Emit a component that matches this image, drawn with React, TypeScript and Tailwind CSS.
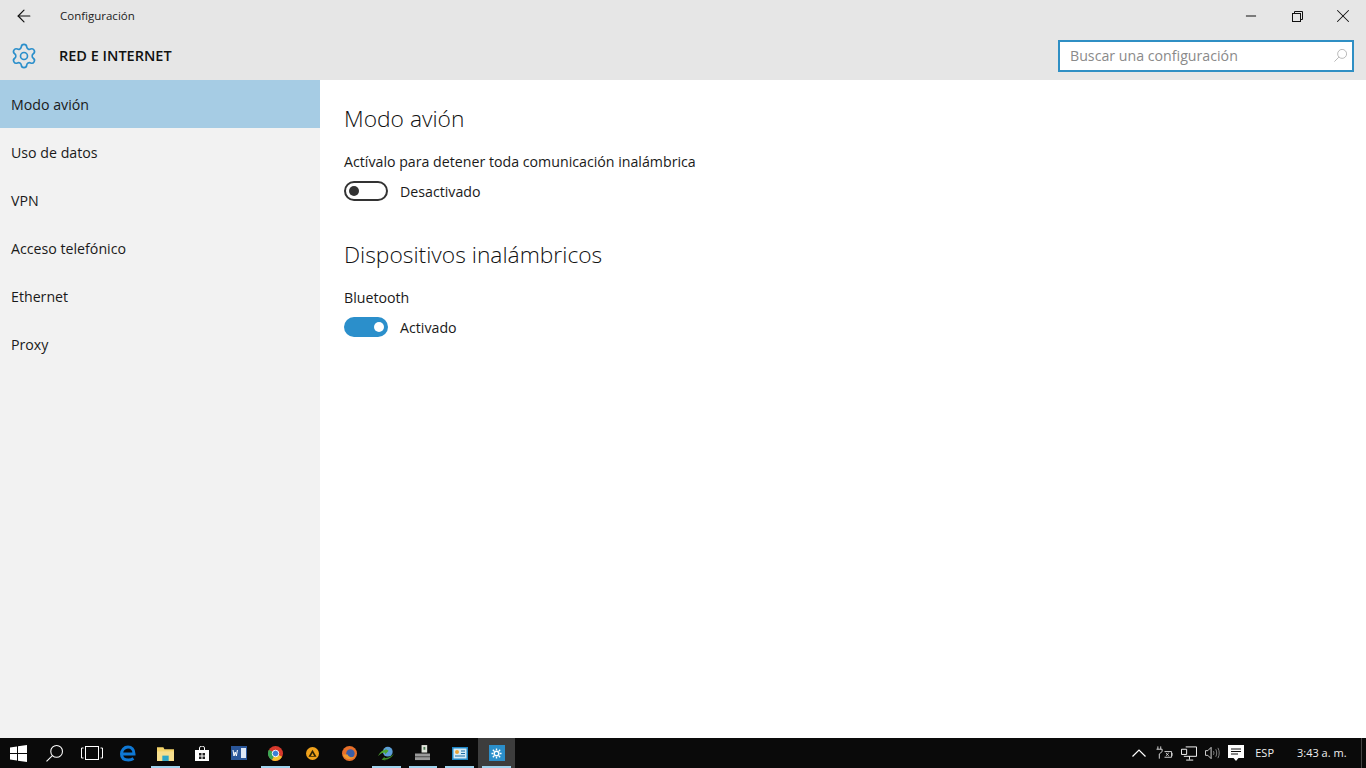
import { ArrowLeft, Minus, Settings, X } from 'lucide-react';

const font = { fontFamily: '"Open Sans", "Noto Sans", sans-serif' };

const navItems = ['Modo avión', 'Uso de datos', 'VPN', 'Acceso telefónico', 'Ethernet', 'Proxy'];

function Magnifier({ className, color }: { className?: string; color: string }) {
  return (
    <svg viewBox="0 0 16 16" className={className} fill="none" stroke={color} strokeWidth="1">
      <circle cx="10" cy="6" r="5.5" />
      <path d="M6 10 .5 15.500" />
    </svg>
  );
}

function RestoreIcon() {
  return (
    <svg viewBox="0 0 11 11" className="h-[11px] w-[11px]" fill="none" stroke="#111" strokeWidth="1">
      <rect x="0.5" y="2.5" width="8" height="8" />
      <path d="M2.500 2.500V.5h8v8H8.500" />
    </svg>
  );
}

function Toggle({ on }: { on: boolean }) {
  return on ? (
    <div className="flex h-5 w-11 items-center justify-end rounded-full bg-[#2b8fcb] pr-[4px]">
      <div className="h-[10px] w-[10px] rounded-full bg-white" />
    </div>
  ) : (
    <div className="flex h-5 w-11 items-center rounded-full border-2 border-[#333] pl-[3px]">
      <div className="h-[10px] w-[10px] rounded-full bg-[#333]" />
    </div>
  );
}

function Setting({ label, state, on }: { label: string; state: string; on: boolean }) {
  return (
    <div>
      <div className="text-[14.2px] leading-5 text-[#1a1a1a]">{label}</div>
      <div className="mt-[8px] flex items-center gap-3">
        <Toggle on={on} />
        <span className="pt-[2px] text-[14.2px] leading-5 text-[#1a1a1a]">{state}</span>
      </div>
    </div>
  );
}

function WinLogo() {
  return (
    <svg viewBox="0 0 17 17" className="h-[17px] w-[17px]" fill="#fff">
      <path d="M0 2.500 7 1.500V8H0zM8 1.300 17 0v8H8zM0 9h7v6.500l-7-1zM8 9h9v8l-9-1.300z" />
    </svg>
  );
}

function TaskIcon({ children, open, active }: { children: React.ReactNode; open?: boolean; active?: boolean }) {
  return (
    <div className={`relative flex h-[30px] w-[36.8px] items-center justify-center ${active ? 'bg-[#3d3d3d]' : ''}`}>
      {children}
      {open && <div className="absolute inset-x-[4px] bottom-0 h-[2px] bg-[#9fd3ee]" />}
    </div>
  );
}

export default function App() {
  return (
    <div className="flex h-[768px] w-[1366px] flex-col overflow-hidden bg-white" style={font}>
      <header className="h-20 shrink-0 bg-[#e6e6e6]">
        <div className="flex h-8 items-center">
          <ArrowLeft className="ml-[14px] h-5 w-5 text-[#111]" strokeWidth={1.4} />
          <span className="ml-[26px] text-[11.5px] text-[#222]">Configuración</span>
          <div className="ml-auto flex items-center">
            <div className="flex w-[46px] justify-center"><Minus className="h-4 w-4 text-[#111]" strokeWidth={1.5} /></div>
            <div className="flex w-[46px] justify-center"><RestoreIcon /></div>
            <div className="flex w-[46px] justify-center"><X className="h-[22px] w-[22px] text-[#111]" strokeWidth={1.1} /></div>
          </div>
        </div>
        <div className="flex h-12 items-center pb-[1px]">
          <Settings className="ml-[10px] h-[28px] w-[28px] text-[#2b8fcb]" strokeWidth={1.4} />
          <span className="ml-[21px] text-[14.5px] font-semibold text-[#111]">RED E INTERNET</span>
          <div className="ml-auto mr-[12px] flex h-8 w-[296px] items-center justify-between border-2 border-[#2f8fc4] bg-white pl-[10px] pr-[5px]">
            <span className="text-[14.2px] text-[#8a8a8a]">Buscar una configuración</span>
            <Magnifier className="h-[13px] w-[13px]" color="#aaa" />
          </div>
        </div>
      </header>

      <div className="flex min-h-0 flex-1">
        <nav className="w-80 shrink-0 bg-[#f2f2f2]">
          {navItems.map((item, i) => (
            <div
              key={item}
              className={`flex h-12 items-center pl-[11px] pt-[2px] text-[14.2px] text-[#1a1a1a] ${i === 0 ? 'bg-[#a6cce4]' : ''}`}
            >
              {item}
            </div>
          ))}
        </nav>
        <main className="flex-1 pl-6 pt-[23px]">
          <h2 className="text-[22.8px] font-light leading-8 text-[#111]">Modo avión</h2>
          <div className="mt-[17px]">
            <Setting label="Actívalo para detener toda comunicación inalámbrica" state="Desactivado" on={false} />
          </div>
          <h2 className="mt-[37px] text-[22.8px] font-light leading-8 text-[#111]">Dispositivos inalámbricos</h2>
          <div className="mt-[17px]">
            <Setting label="Bluetooth" state="Activado" on />
          </div>
        </main>
      </div>

      <footer className="flex h-[30px] shrink-0 items-center bg-[#0a0a0a] text-white">
        <div className="flex w-[36.6px] justify-center"><WinLogo /></div>
        <TaskIcon>
          <Magnifier className="h-[17px] w-[17px]" color="#fff" />
        </TaskIcon>
        <TaskIcon>
          <svg viewBox="0 0 22 14" className="h-[14px] w-[22px]" fill="none" stroke="#fff" strokeWidth="1">
            <rect x="4.5" y="0.5" width="13" height="13" />
            <path d="M2.500 2H.5v10h2M19.500 2h2v10h-2" />
          </svg>
        </TaskIcon>
        <TaskIcon>
          <svg viewBox="0 0 16 16" className="-ml-[2px] h-[17px] w-[16px]" fill="none" stroke="#0f78d4" strokeWidth="3">
            <path d="M1.500 8.500h12.500C14 4 11.500 1.500 8 1.500S1.500 4.500 1.500 8.500 4 14.500 8.500 14.500c2 0 3.500-.5 5-1.500" />
          </svg>
        </TaskIcon>
        <TaskIcon open>
          <svg viewBox="0 0 16 14" className="h-[15px] w-[17px]">
            <path d="M0 1h6l1 2h9v11H0z" fill="#f3d36b" />
            <path d="M0 5h16v9H0z" fill="#f7df8e" />
            <path d="M5 9h6v5H5z" fill="#2ea7c9" />
          </svg>
        </TaskIcon>
        <TaskIcon>
          <svg viewBox="0 0 14 15" className="h-[15px] w-[14px]">
            <path d="M0 4h14v11H0z" fill="#fff" />
            <path d="M4.500 4V2a2.500 2 0 0 1 5 0v2" fill="none" stroke="#fff" />
            <path d="M4 7h2.500v2.500H4zM7.500 7H10v2.500H7.500zM4 10.500h2.500V13H4zM7.500 10.500H10V13H7.500z" fill="#222" />
          </svg>
        </TaskIcon>
        <TaskIcon>
          <svg viewBox="0 0 16 14" className="h-[14px] w-[16px]">
            <path d="M0 0h16v14H0z" fill="#2a5699" />
            <path d="M10 2h5v10h-5z" fill="#dfe8f5" />
            <path d="M2 4l1 6 1.200-4 1.200 4 1-6" fill="none" stroke="#fff" />
          </svg>
        </TaskIcon>
        <TaskIcon open>
          <svg viewBox="0 0 16 16" className="h-[15px] w-[15px]">
            <circle cx="8" cy="8" r="8" fill="#d8392c" />
            <path d="M8 8 15 11.500A8 8 0 0 1 4 15z" fill="#f3c22e" />
            <path d="M8 8 4 15A8 8 0 0 1 1 4z" fill="#3aa655" />
            <circle cx="8" cy="8" r="3.500" fill="#3a7fd5" stroke="#fff" />
          </svg>
        </TaskIcon>
        <TaskIcon>
          <svg viewBox="0 0 16 16" className="h-[13px] w-[13px]">
            <circle cx="8" cy="8" r="8" fill="#f0a21c" />
            <path d="M8 3.500 13 12H3z" fill="#2b2205" />
            <path d="M8 7.500 10 11H6z" fill="#f0a21c" />
          </svg>
        </TaskIcon>
        <TaskIcon>
          <svg viewBox="0 0 16 16" className="h-[15px] w-[15px]">
            <circle cx="8" cy="8" r="8" fill="#e8702a" />
            <circle cx="9" cy="8" r="4.500" fill="#3a5ea8" />
            <path d="M1 9c1 5 9 7 13 2-3 2-7 1-8-2z" fill="#f29a2e" />
          </svg>
        </TaskIcon>
        <TaskIcon open>
          <svg viewBox="0 0 18 16" className="h-[15px] w-[16px]">
            <circle cx="11" cy="6" r="5.500" fill="#5d9fd8" />
            <path d="M0 11c3-6 6-7 9-7L7 2l5 3-4 4V7c-3 0-5 1-8 4z" fill="#4fa62e" />
            <path d="M18 8c-3 6-8 7-11 7l2 1-5-1 3-3 1 1c3 0 6-1 10-5z" fill="#3c8a25" />
          </svg>
        </TaskIcon>
        <TaskIcon open>
          <svg viewBox="0 0 16 18" className="h-[17px] w-[15px]">
            <path d="M7 0h6v8H7z" fill="#dfe3da" />
            <path d="M9 2h2v3H9z" fill="#4c7c55" />
            <path d="M0 9h16v7H0z" fill="#9a9a9a" />
            <path d="M0 12h16v1H0z" fill="#444" />
          </svg>
        </TaskIcon>
        <TaskIcon open>
          <svg viewBox="0 0 16 13" className="h-[13px] w-[16px]">
            <path d="M0 0h16v13H0z" fill="#1e86c6" />
            <path d="M1.500 1.500h13v10h-13z" fill="#d5ecf7" />
            <circle cx="5" cy="5" r="2" fill="#e7a43a" />
            <path d="M9 3.500h4v1H9zM9 6h4v1H9zM3 8.500h10v1H3z" fill="#1e6ea6" />
          </svg>
        </TaskIcon>
        <TaskIcon open active>
          <div className="flex h-4 w-4 items-center justify-center bg-[#2b8fcb]">
            <svg viewBox="0 0 12 12" className="h-[11px] w-[11px]" fill="none" stroke="#fff" strokeWidth="1.500">
              <circle cx="6" cy="6" r="2.500" />
              <path d="M6 .5v2M6 9.500v2M.5 6h2M9.500 6h2M2 2l1.500 1.500M8.500 8.500 10 10M2 10l1.500-1.500M8.500 3.500 10 2" />
            </svg>
          </div>
        </TaskIcon>

        <div className="ml-auto flex items-center">
          <svg viewBox="0 0 14 8" className="h-[8px] w-[14px]" fill="none" stroke="#fff" strokeWidth="1.200"><path d="M.5 7.500 7 1l6.500 6.500" /></svg>
          <svg viewBox="0 0 18 14" className="ml-[10px] h-[14px] w-[17px]" fill="none" stroke="#ddd" strokeWidth="1">
            <path d="M2 0v3M5 0v3M.5 3h6v2.500L3.500 8v5M9 5.500h7.500v6H9M17 7v3" />
            <path d="m10.500 7 3 3M13.500 7l-3 3" />
          </svg>
          <svg viewBox="0 0 17 15" className="ml-[8px] h-[15px] w-[16px]" fill="none" stroke="#fff" strokeWidth="1">
            <path d="M5 .5h11.500v10H3M.5 3H6v5.500H.5zM9 10.500V14M5.500 14.500H13" />
          </svg>
          <svg viewBox="0 0 16 14" className="ml-[8px] h-[14px] w-[15px]" fill="none" stroke="#ddd" strokeWidth="1">
            <path d="M.5 4.500h2.500L6.500 1v12L3 9.500H.5z" />
            <path d="M9 5c.7 1.300.7 2.700 0 4M11.500 3c1.300 2.600 1.300 5.400 0 8M13.800 1.500c1.800 3.500 1.800 7.500 0 11" stroke="#888" />
          </svg>
          <svg viewBox="0 0 16 16" className="ml-[8px] h-[16px] w-[16px]">
            <path d="M0 0h16v13h-5.500L8 16l-2.500-3H0z" fill="#fff" />
            <path d="M3 3.500h10v1H3zM3 6h10v1H3zM3 8.500h7v1H3z" fill="#111" />
          </svg>
          <span className="ml-[11px] text-[11px] text-[#eee]">ESP</span>
          <span className="ml-[23px] w-[51px] whitespace-nowrap text-[11px] text-[#eee]">3:43 a. m.</span>
          <div className="ml-[13px] mr-[4px] h-[30px] w-px bg-[#444]" />
        </div>
      </footer>
    </div>
  );
}
